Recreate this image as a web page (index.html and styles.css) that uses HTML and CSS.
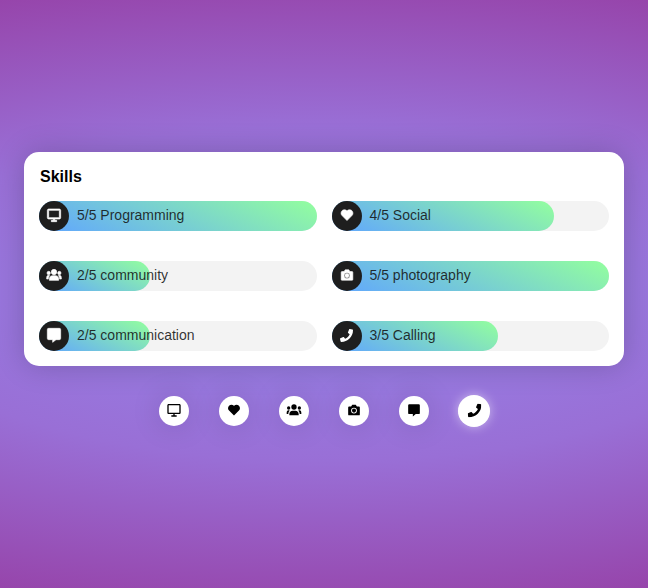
FILE: index.html
```html
<!DOCTYPE html>
<html lang="en">
<head>
<meta charset="utf-8">
<meta name="viewport" content="width=device-width, initial-scale=1">
<title>Skills</title>
<link rel="stylesheet" href="styles.css">
</head>
<body>
<svg class="sprite" aria-hidden="true">
  <symbol id="monitor" viewBox="0 0 24 24"><path d="M20 3H4c-1.100 0-2 .9-2 2v11c0 1.100.9 2 2 2h7v2H8v2h8v-2h-3v-2h7c1.100 0 2-.9 2-2V5c0-1.100-.9-2-2-2zM4 16V5h16v11z"/></symbol>
  <symbol id="heart" viewBox="0 0 24 24"><path d="M20.500 4.600C18.200 2.300 14.500 2.300 12.200 4.600L12 4.900l-.2-.3C9.500 2.300 5.800 2.300 3.500 4.600c-2.300 2.300-2.300 6.100 0 8.400L12 21.600l8.500-8.600c2.300-2.300 2.300-6.100 0-8.400z"/></symbol>
  <symbol id="group" viewBox="0 0 24 24"><circle cx="12" cy="7.500" r="4"/><circle cx="4" cy="9" r="2.500"/><circle cx="20" cy="9" r="2.500"/><path d="M5 20v-2c0-3 2-5 5-5h4c3 0 5 2 5 5v2zM1 18v-2c0-2 1-3.500 2.500-3.500 1 0 1.200.2 2 .5C4 14.500 3.500 16 3.500 18zM23 18v-2c0-2-1-3.500-2.500-3.500-1 0-1.200.2-2 .5 1.500 1.500 2 3 2 5z"/></symbol>
  <symbol id="camera" viewBox="0 0 24 24"><path fill-rule="evenodd" d="M9 3h6l2 3h3.500A1.500 1.500 0 0 1 22 7.500v12a1.500 1.500 0 0 1-1.500 1.500h-17A1.500 1.500 0 0 1 2 19.500v-12A1.500 1.500 0 0 1 3.500 6H7zM12 8a5 5 0 1 0 0 10 5 5 0 0 0 0-10zM12 9.500a3.500 3.500 0 1 1 0 7 3.500 3.500 0 0 1 0-7z"/></symbol>
  <symbol id="message" viewBox="0 0 24 24"><path d="M4 2h16a2 2 0 0 1 2 2v13a2 2 0 0 1-2 2h-5l-5 4v-4H4a2 2 0 0 1-2-2V4a2 2 0 0 1 2-2z"/></symbol>
  <symbol id="phone" viewBox="0 0 512 512"><path d="M493.400 24.600l-104-24c-11.300-2.600-22.900 3.300-27.500 13.900l-48 112c-4.200 9.800-1.400 21.300 6.900 28l60.600 49.600c-36 76.700-98.900 140.500-177.200 177.200l-49.600-60.600c-6.800-8.300-18.200-11.100-28-6.900l-112 48C3.900 366.500-2 378.100.600 389.400l24 104C27.100 504.200 36.700 512 48 512c256.100 0 464-207.500 464-464 0-11.200-7.700-20.900-18.600-23.400z"/></symbol>
</svg>

<main class="page">
  <section class="card">
    <h1 class="title">Skills</h1>
    <ul class="skills">
      <li class="skill"><div class="fill level-5"></div><span class="badge"><svg class="icon outlined"><use href="#monitor"/></svg></span><span class="label">5/5 Programming</span></li>
      <li class="skill"><div class="fill level-4"></div><span class="badge"><svg class="icon small outlined"><use href="#heart"/></svg></span><span class="label">4/5 Social</span></li>
      <li class="skill"><div class="fill level-2"></div><span class="badge"><svg class="icon outlined"><use href="#group"/></svg></span><span class="label">2/5 community</span></li>
      <li class="skill"><div class="fill level-5"></div><span class="badge"><svg class="icon small outlined"><use href="#camera"/></svg></span><span class="label">5/5 photography</span></li>
      <li class="skill"><div class="fill level-2"></div><span class="badge"><svg class="icon outlined"><use href="#message"/></svg></span><span class="label">2/5 communication</span></li>
      <li class="skill"><div class="fill level-3"></div><span class="badge"><svg class="icon phone"><use href="#phone"/></svg></span><span class="label">3/5 Calling</span></li>
    </ul>
  </section>

  <nav class="actions" aria-label="Skills">
    <button class="action" type="button" aria-label="Programming"><svg class="icon"><use href="#monitor"/></svg></button>
    <button class="action" type="button" aria-label="Social"><svg class="icon small"><use href="#heart"/></svg></button>
    <button class="action" type="button" aria-label="Community"><svg class="icon"><use href="#group"/></svg></button>
    <button class="action" type="button" aria-label="Photography"><svg class="icon small"><use href="#camera"/></svg></button>
    <button class="action" type="button" aria-label="Communication"><svg class="icon small"><use href="#message"/></svg></button>
    <button class="action active" type="button" aria-label="Calling"><svg class="icon phone"><use href="#phone"/></svg></button>
  </nav>
</main>
</body>
</html>
```
FILE: styles.css
```css
* {
  box-sizing: border-box;
}

body {
  margin: 0;
  font-family: "Liberation Sans", Arial, sans-serif;
  background: radial-gradient(ellipse 140% 57% at center, #9684ea 0%, #996fd6 50%, #9640a6 100%);
}

.sprite {
  display: none;
}

.page {
  min-height: 100vh;
  display: flex;
  flex-direction: column;
  align-items: center;
  justify-content: center;
  gap: 30px;
  padding: 0 24px 10px;
}

.card {
  width: 100%;
  max-width: 600px;
  padding: 15px;
  border-radius: 15px;
  background: #fff;
  box-shadow: 0 0 30px rgba(0, 0, 0, 0.2);
}

.title {
  margin: 0 0 15px;
  padding-left: 1px;
  font-size: 16px;
  line-height: 19px;
}

.skills {
  display: grid;
  grid-template-columns: 1fr 1fr;
  gap: 30px 15px;
  margin: 0;
  padding: 0;
  list-style: none;
}

.skill {
  position: relative;
  display: flex;
  align-items: center;
  height: 30px;
  border-radius: 15px;
  background: #f3f3f3;
}

.fill {
  position: absolute;
  inset: 0 auto 0 0;
  border-radius: 15px;
  background: linear-gradient(25deg, #60a5ff, #93ff9e);
}

.level-2 { width: 40%; }
.level-3 { width: 60%; }
.level-4 { width: 80%; }
.level-5 { width: 100%; }

.badge {
  position: relative;
  display: grid;
  place-items: center;
  width: 30px;
  height: 30px;
  padding-bottom: 2px;
  border-radius: 50%;
  background: #1e1e1e;
  color: #fff;
}

.label {
  position: relative;
  padding: 0 8px 2px;
  font-size: 14px;
  line-height: 16px;
  color: rgba(20, 20, 20, 0.88);
}

.icon {
  display: block;
  width: 16px;
  height: 16px;
  fill: currentColor;
}

.small {
  width: 14px;
  height: 14px;
}

.phone {
  width: 13px;
  height: 13px;
}

.outlined {
  stroke: currentColor;
  stroke-width: 1px;
}

.actions {
  display: flex;
  gap: 30px;
}

.action {
  display: grid;
  place-items: center;
  width: 30px;
  height: 30px;
  padding: 0 0 2px;
  border: 0;
  border-radius: 50%;
  background: #fff;
  color: #000;
  box-shadow: 0 0 30px rgba(0, 0, 0, 0.15);
}

.active {
  transform: scale(1.07);
  box-shadow: 0 0 10px rgba(255, 255, 255, 0.5);
}
```
